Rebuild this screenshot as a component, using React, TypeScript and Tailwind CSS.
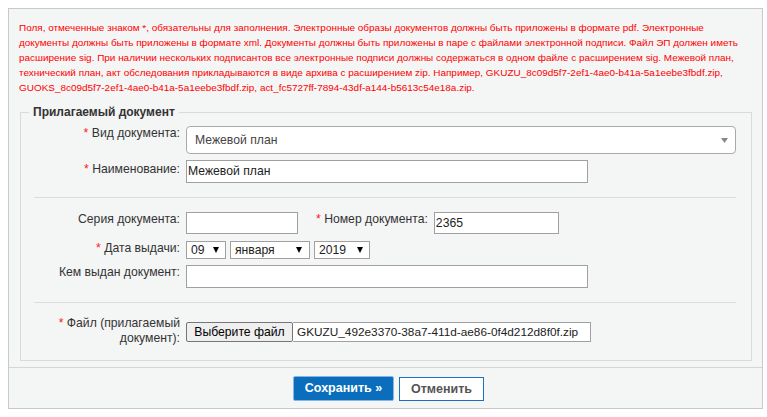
import React from "react";

const Arrow = ({ color = "#000", w = 7, h = 6 }: { color?: string; w?: number; h?: number }) => (
  <svg width={w} height={h} viewBox={`0 0 ${w} ${h}`} className="block">
    <polygon points={`0,0 ${w},0 ${w / 2},${h}`} fill={color} />
  </svg>
);

const Star = () => <span className="text-[#ff2020]">* </span>;

export default function App() {
  return (
    <div
      className="bg-white w-[767px] h-[417px] pt-[8px] pl-[8px]"
      style={{ fontFamily: '"Liberation Sans", Arial, sans-serif' }}
    >
      <div className="w-[755px] border border-[#c9c9c9] bg-[#f4f5f5]">
        <div className="pt-[11px] px-[10px]">
          <p className="text-[9.95px] leading-[15px] text-[#ff0000] whitespace-nowrap">
            Поля, отмеченные знаком *, обязательны для заполнения. Электронные образы документов должны быть приложены в формате pdf. Электронные
            <br />
            документы должны быть приложены в формате xml. Документы должны быть приложены в паре с файлами электронной подписи. Файл ЭП должен иметь
            <br />
            расширение sig. При наличии нескольких подписантов все электронные подписи должны содержаться в одном файле с расширением sig. Межевой план,
            <br />
            технический план, акт обследования прикладываются в виде архива с расширением zip. Например, GKUZU_8c09d5f7-2ef1-4ae0-b41a-5a1eebe3fbdf.zip,
            <br />
            GUOKS_8c09d5f7-2ef1-4ae0-b41a-5a1eebe3fbdf.zip, act_fc5727ff-7894-43df-a144-b5613c54e18a.zip.
          </p>
          <fieldset className="mt-[10px] ml-[1px] w-[732px] border border-[#dadada] pl-[13px] pr-[15px] pb-[14px] text-[12.2px] leading-[15px] text-[#333]">
            <legend className="-ml-[5px] px-[4px] font-bold text-[12px] leading-[15px] text-[#333]">
              Прилагаемый документ
            </legend>
            <div className="pt-[6px]">
              {/* Row 1 */}
              <div className="flex items-start">
                <div className="w-[146px] text-right">
                  <Star />Вид документа:
                </div>
                <div className="ml-[6px] w-[550px] h-[28px] rounded-[4px] border border-[#aaaaaa] bg-white flex items-center justify-between pl-[8px] pr-[7px] text-[#444]">
                  <span>Межевой план</span>
                  <Arrow color="#888" w={7} h={5} />
                </div>
              </div>
              {/* Row 2 */}
              <div className="flex items-start mt-[6px]">
                <div className="w-[146px] text-right pt-[2px]">
                  <Star />Наименование:
                </div>
                <div className="ml-[6px] w-[402px] h-[23px] border border-[#a0a0a0] bg-white flex items-center pl-[1px] text-[#222]">
                  Межевой план
                </div>
              </div>
              <div className="mt-[14px] h-px bg-[#dddddd]" />
              {/* Row 3 */}
              <div className="flex items-start mt-[14px]">
                <div className="w-[146px] text-right">Серия документа:</div>
                <div className="ml-[6px] w-[112px] h-[22px] border border-[#a0a0a0] bg-white" />
                <div className="ml-[18px]">
                  <Star />Номер документа:
                </div>
                <div className="ml-[6px] w-[125px] h-[22px] border border-[#a0a0a0] bg-white flex items-center pl-[1px] pt-[1px] text-[#222]">
                  2365
                </div>
              </div>
              {/* Row 4 */}
              <div className="flex items-start mt-[7px]">
                <div className="w-[146px] text-right">
                  <Star />Дата выдачи:
                </div>
                <div className="ml-[6px] w-[40px] h-[18px] border border-[#a0a0a0] bg-white flex items-center justify-between pl-[4px] pr-[6px] text-[#222]">
                  <span>09</span>
                  <Arrow w={6} h={6} />
                </div>
                <div className="ml-[4px] w-[80px] h-[18px] border border-[#a0a0a0] bg-white flex items-center justify-between pl-[4px] pr-[7px] text-[#222]">
                  <span>января</span>
                  <Arrow w={6} h={6} />
                </div>
                <div className="ml-[4px] w-[56px] h-[18px] border border-[#a0a0a0] bg-white flex items-center justify-between pl-[4px] pr-[6px] text-[#222]">
                  <span>2019</span>
                  <Arrow w={6} h={6} />
                </div>
              </div>
              {/* Row 5 */}
              <div className="flex items-start mt-[6px]">
                <div className="w-[146px] text-right">Кем выдан документ:</div>
                <div className="ml-[6px] w-[402px] h-[23px] border border-[#a0a0a0] bg-white" />
              </div>
              <div className="mt-[14px] h-px bg-[#dddddd]" />
              {/* Row 6 */}
              <div className="flex items-start mt-[13px]">
                <div className="w-[146px] text-right">
                  <Star />Файл (прилагаемый
                  <br />
                  документ):
                </div>
                <div className="ml-[6px] mt-[6px] flex">
                  <div className="w-[107px] h-[20px] border border-[#767676] bg-[#efefef] flex items-center justify-center text-black rounded-[2px] whitespace-nowrap">
                    Выберите файл
                  </div>
                  <div className="w-[298px] h-[20px] border border-l-0 border-[#a0a0a0] bg-white flex items-center pl-[4px] text-[#222] text-[11.8px] whitespace-nowrap">
                    GKUZU_492e3370-38a7-411d-ae86-0f4d212d8f0f.zip
                  </div>
                </div>
              </div>
            </div>
          </fieldset>
        </div>
        <div className="mt-[6px] border-t border-[#d6d6d6] flex justify-center items-end gap-[5px] pl-[6px] pt-[8px] pb-[7px]">
          <div className="w-[101px] h-[25px] bg-[#0a6ebd] border border-[#8ab4e8] rounded-[2px] flex items-center justify-center text-white font-bold text-[12.5px]">
            Сохранить »
          </div>
          <div className="w-[85px] h-[24px] bg-white border border-[#1a6fbf] flex items-center justify-center text-[#555] font-bold text-[12.5px]">
            Отменить
          </div>
        </div>
      </div>
    </div>
  );
}
